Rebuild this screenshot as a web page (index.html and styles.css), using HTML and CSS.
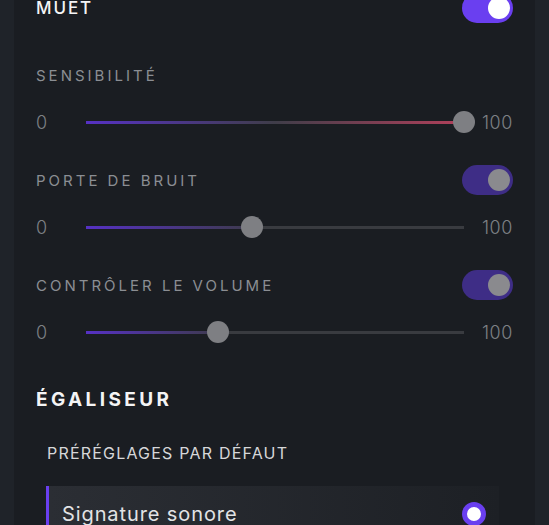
FILE: index.html
```html
<!DOCTYPE html>
<html lang="fr">

<head>
    <meta charset="UTF-8">
    <meta name="viewport" content="width=device-width, initial-scale=1.0">
    <title>Paramètres du micro</title>
    <link rel="stylesheet" href="styles.css">
</head>

<body>
    <div class="panel">
        <!-- Mute -->
        <div class="row">
            <span class="title">MUET</span>
            <span class="toggle on"><span class="knob"></span></span>
        </div>

        <!-- Sensitivity -->
        <section class="setting first">
            <div class="row">
                <span class="label">SENSIBILITÉ</span>
            </div>
            <div class="slider">
                <span class="min">0</span>
                <div class="track">
                    <div class="fill fill-heat" style="width: 100%"></div>
                    <span class="thumb" style="left: 100%"></span>
                </div>
                <span class="max">100</span>
            </div>
        </section>

        <!-- Noise gate -->
        <section class="setting">
            <div class="row">
                <span class="label">PORTE DE BRUIT</span>
                <span class="toggle"><span class="knob"></span></span>
            </div>
            <div class="slider">
                <span class="min">0</span>
                <div class="track">
                    <div class="fill" style="width: 44%"></div>
                    <span class="thumb" style="left: 44%"></span>
                </div>
                <span class="max">100</span>
            </div>
        </section>

        <!-- Volume control -->
        <section class="setting">
            <div class="row">
                <span class="label">CONTRÔLER LE VOLUME</span>
                <span class="toggle"><span class="knob"></span></span>
            </div>
            <div class="slider">
                <span class="min">0</span>
                <div class="track">
                    <div class="fill" style="width: 35%"></div>
                    <span class="thumb" style="left: 35%"></span>
                </div>
                <span class="max">100</span>
            </div>
        </section>

        <!-- Equalizer -->
        <h2 class="eq-title">ÉGALISEUR</h2>
        <div class="presets">
            <h3>PRÉRÉGLAGES PAR DÉFAUT</h3>
            <div class="preset active">
                <span>Signature sonore</span>
                <span class="radio"></span>
            </div>
        </div>
    </div>
</body>

</html>
```

FILE: styles.css
```css
body {
    margin: 0;
    padding: 0 14px;
    background-color: #1f2329;
    font-family: Inter, "Noto Sans", sans-serif;
    overflow: hidden;
}

.panel {
    margin-top: -7px;
    padding: 0 22px 40px;
    background-color: #1a1d22;
    min-height: 600px;
}

.row {
    display: flex;
    align-items: center;
    justify-content: space-between;
    height: 30px;
}

.title {
    color: #f4f4f5;
    font-size: 17px;
    font-weight: 500;
    letter-spacing: 1.9px;
}

.label {
    color: #8b8e93;
    font-size: 15px;
    letter-spacing: 3px;
}

.setting {
    margin-top: 32px;
}

.setting.first {
    margin-top: 37px;
}

/* toggles */
.toggle {
    display: flex;
    align-items: center;
    justify-content: flex-end;
    width: 51px;
    height: 30px;
    padding: 0 3px;
    box-sizing: border-box;
    border-radius: 15px;
    background-color: #3e2d86;
}

.toggle .knob {
    width: 22px;
    height: 22px;
    border-radius: 50%;
    background-color: #8a8a8e;
}

.toggle.on {
    background-color: #6a3ff0;
}

.toggle.on .knob {
    background-color: #fff;
}

/* sliders */
.slider {
    display: flex;
    align-items: center;
    height: 22px;
    margin-top: 21px;
    color: #7d8085;
    font-size: 18px;
    font-weight: 300;
}

.slider .min {
    width: 50px;
}

.slider .max {
    width: 49px;
    text-align: right;
    letter-spacing: 0.6px;
}

.track {
    position: relative;
    flex: 1;
    height: 3px;
    background-color: #393b40;
}

.fill {
    height: 100%;
    background: linear-gradient(90deg, #5631c4, #3d3a4c);
}

.fill-heat {
    background: linear-gradient(90deg, #5631c4, #3f3d49 50%, #b2405b);
}

.thumb {
    position: absolute;
    top: 50%;
    width: 22px;
    height: 22px;
    margin: -11px 0 0 -11px;
    border-radius: 50%;
    background-color: #7e7f83;
}

/* equalizer */
.eq-title {
    margin: 45px 0 0;
    color: #f4f4f5;
    font-size: 19px;
    line-height: 24px;
    font-weight: 700;
    letter-spacing: 3.4px;
}

.presets {
    padding: 0 14px 0 10px;
}

.presets h3 {
    margin: 31px 0 0 1px;
    color: #d6d7d9;
    font-size: 16px;
    line-height: 20px;
    font-weight: 400;
    letter-spacing: 1.2px;
}

.preset {
    display: flex;
    align-items: center;
    justify-content: space-between;
    height: 56px;
    margin-top: 23px;
    padding: 0 0 0 13px;
    border-left: 3px solid #6a3ff0;
    background: linear-gradient(90deg, #2b2e34, #1d2025);
    color: #e2e3e5;
    font-size: 20px;
    letter-spacing: 0.9px;
}

.radio {
    width: 14px;
    height: 14px;
    margin-right: 13px;
    border: 5px solid #6a3ff0;
    border-radius: 50%;
    background-color: #fff;
}
```
